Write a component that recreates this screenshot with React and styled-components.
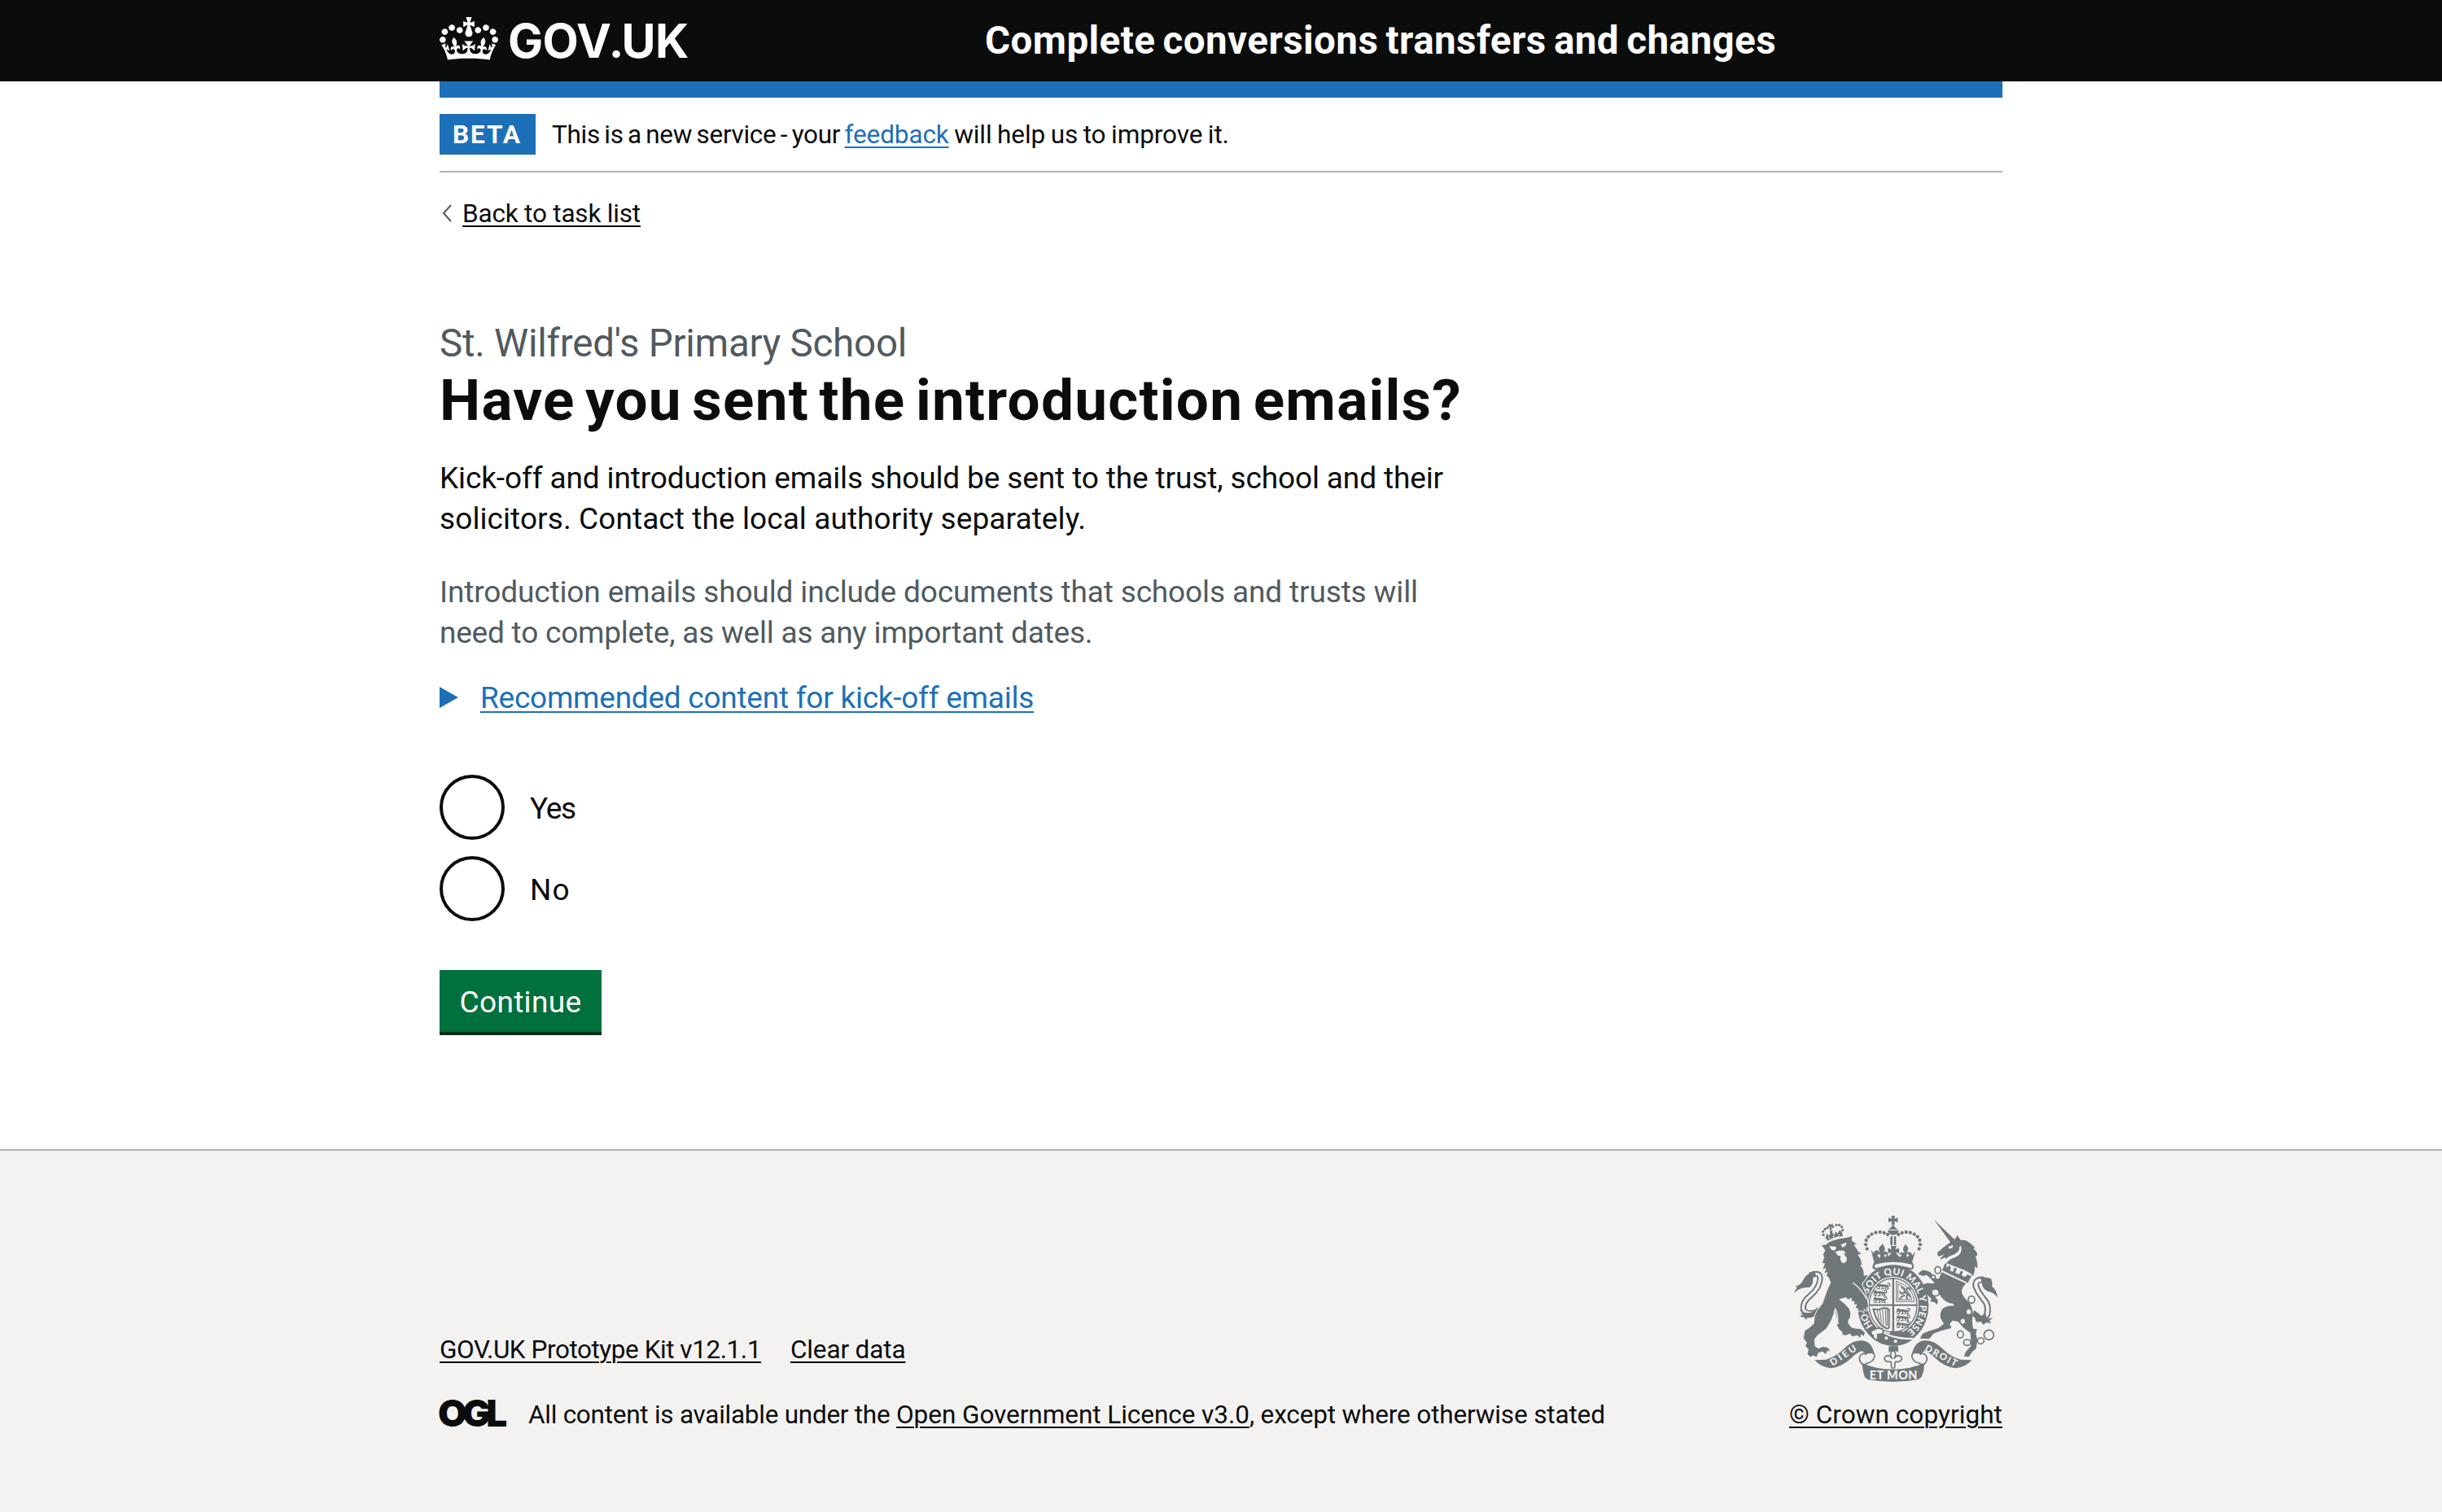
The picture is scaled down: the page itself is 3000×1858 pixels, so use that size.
import React from "react";
import styled, { createGlobalStyle } from "styled-components";

const ink = "#0b0c0c";
const secondary = "#505a5f";
const blue = "#1d70b8";
const rule = "#b1b4b6";
const footerBg = "#f3f2f1";
const crestGrey = "#6f777b";

const GlobalStyle = createGlobalStyle`
  *, *::before, *::after { box-sizing: border-box; }
  body {
    margin: 0;
    background: #fff;
    color: ${ink};
    font-family: Roboto, "Noto Sans", sans-serif;
  }
  h1, p { margin: 0; }
`;

const Page = styled.div`
  display: flex;
  flex-direction: column;
  min-height: 1858px;
`;

const Container = styled.div`
  width: 1920px;
  margin: 0 auto;
`;

const Header = styled.header`
  height: 100px;
  background: ${ink};
  color: #fff;
`;

const HeaderRow = styled(Container)`
  display: grid;
  grid-template-columns: 670px 1fr;
  height: 100px;
  padding-top: 20px;
`;

const LogoLink = styled.a`
  display: flex;
  align-items: flex-start;
  gap: 12px;
  color: #fff;
`;

const Crown = styled.svg`
  display: block;
  width: 72px;
  height: 53px;
  margin-top: 1px;
`;

const LogoText = styled.span`
  margin-top: -1px;
  font: 700 57.5px/60px Inter, Roboto, sans-serif;
  letter-spacing: -0.6px;
  white-space: nowrap;
`;

const LogoDot = styled.span`
  font-family: Lato, sans-serif;
  font-weight: 900;
`;

const ServiceName = styled.span`
  font-size: 47.5px;
  line-height: 60px;
  font-weight: 700;
  letter-spacing: 0.45px;
  word-spacing: -3px;
  white-space: nowrap;
`;

const HeaderBar = styled(Container)`
  height: 20px;
  background: ${blue};
`;

const PhaseBanner = styled(Container)`
  display: flex;
  align-items: center;
  gap: 20px;
  height: 92px;
  border-bottom: 2px solid ${rule};
`;

const Tag = styled.strong`
  width: 118px;
  height: 50px;
  padding: 1px 0 0 16px;
  background: ${blue};
  color: #fff;
  font-size: 31.5px;
  line-height: 50px;
  font-weight: 700;
  letter-spacing: 1.9px;
`;

const Small = styled.span`
  font-size: 31.5px;
  line-height: 40px;
  letter-spacing: ${(p) => p.$track || 0}px;
  word-spacing: ${(p) => p.$words || 0}px;
  white-space: pre;
`;

const PhaseText = styled.p`
  padding-top: 2px;
`;

const Link = styled.a`
  color: ${(p) => (p.$blue ? blue : ink)};
  letter-spacing: ${(p) => p.$track || 0}px;
  text-decoration: underline;
  text-decoration-thickness: 2px;
  text-underline-offset: 4px;
`;

const Main = styled(Container)`
  display: flex;
  flex-direction: column;
  align-items: flex-start;
  flex: 1;
`;

const BackLink = styled.div`
  display: flex;
  align-items: center;
  gap: 13px;
  margin-top: 31px;
  padding-left: 3px;
`;

const Chevron = styled.svg`
  display: block;
  width: 12px;
  height: 22px;
  margin-bottom: 2px;
`;

const Caption = styled.span`
  margin-top: 109px;
  color: ${secondary};
  font-size: 47.5px;
  line-height: 60px;
  letter-spacing: -0.25px;
`;

const Heading = styled.h1`
  margin-top: 2px;
  font-size: 71px;
  line-height: 75px;
  font-weight: 700;
  letter-spacing: 1.28px;
  word-spacing: -6.5px;
`;

const Paragraph = styled.p`
  display: flex;
  flex-direction: column;
  margin-top: ${(p) => p.$top}px;
  color: ${(p) => (p.$hint ? secondary : ink)};
  font-size: 37px;
  line-height: 50px;
`;

const Line = styled.span`
  letter-spacing: ${(p) => p.$track}px;
  white-space: nowrap;
`;

const Details = styled.div`
  display: flex;
  align-items: center;
  gap: 27px;
  margin-top: 30px;
  font-size: 37px;
  line-height: 50px;
`;

const Marker = styled.span`
  border-style: solid;
  border-color: transparent;
  border-width: 13.5px 0 13.5px 23px;
  border-left-color: ${blue};
  margin-bottom: 3px;
`;

const Radios = styled.div`
  display: flex;
  flex-direction: column;
  gap: 20px;
  margin-top: 69px;
`;

const Radio = styled.label`
  display: flex;
  align-items: center;
  gap: 31px;
  height: 80px;
`;

const Circle = styled.span`
  width: 80px;
  height: 80px;
  border: 4px solid ${ink};
  border-radius: 50%;
  background: #fff;
`;

const RadioLabel = styled.span`
  padding-top: 3px;
  font-size: 37px;
  line-height: 50px;
  letter-spacing: ${(p) => p.$track}px;
`;

const Button = styled.button`
  width: 199px;
  height: 76px;
  margin: 60px 0 144px;
  padding: 4px 0 0;
  border: 0;
  background: #00703c;
  box-shadow: 0 4px 0 #002d18;
  color: #fff;
  font: 400 37px/50px Roboto, "Noto Sans", sans-serif;
  letter-spacing: 0.35px;
`;

const Footer = styled.footer`
  padding: 80px 0 99px;
  border-top: 2px solid ${rule};
  background: ${footerBg};
`;

const FooterRow = styled(Container)`
  display: flex;
  align-items: flex-end;
  justify-content: space-between;
`;

const FooterMeta = styled.div`
  display: flex;
  flex-direction: column;
  gap: 40px;
`;

const FooterLinks = styled.div`
  display: flex;
  gap: 36px;
  height: 40px;
`;

const Licence = styled.div`
  display: flex;
  height: 40px;
`;

const Ogl = styled.span`
  width: 111px;
  margin-left: -2px;
  font: 900 46px/34px Inter, Lato, sans-serif;
  letter-spacing: -5.6px;
`;

const Copyright = styled.div`
  display: flex;
  flex-direction: column;
  align-items: flex-end;
  gap: 21px;
`;

const CrestSvg = styled.svg`
  display: block;
  width: 250px;
  height: 204px;
  margin-right: 6px;
`;

const Motto = styled.text`
  font-family: Lato, sans-serif;
  font-weight: 900;
  fill: ${footerBg};
`;

const g = crestGrey;
const bg = footerBg;

const crownDots = [[336,178],[338,162],[346,149],[358,140],[373,134],[389,132],[404,135],[417,141],[457,141],[470,135],[485,132],[500,134],[515,140],[527,149],[535,162],[537,178],[533,194],[341,194]];
const lionCrownDots = [[180,142],[179,130],[186,121],[195,116],[215,112],[228,106],[239,106],[248,113],[251,125]];
const chainRings = [[602,272,11,13],[585,298,8,7],[593,355,14,13],[726,381,12,13],[685,509,11,13],[710,539,13,11],[760,533,12,11],[790,511,18,18]];

function PassantLion({ x, y }) {
  return (
    <g transform={`translate(${x} ${y})`} fill="none" stroke={g} strokeLinecap="round" strokeLinejoin="round">
      <path strokeWidth="8" d="M8 9 L26 9 L42 12" />
      <path strokeWidth="4" d="M8 9 L3 15 M5 5 L12 3 M14 11 L12 21 L5 21 M24 11 L27 21 L20 22 M36 12 L34 21 M42 12 L46 21 L40 22 M42 11 Q54 12 51 4 Q47 -2 43 3" />
    </g>
  );
}

function RoyalCrown() {
  return (
    <g>
      <path d="M430 72h14l-3 11 13-4v17l-13-4 3 12h-14l3-12-13 4V79l13 4z" />
      <path d="M437 103l9 14 10 6H418l10-6z" />
      <path d="M417 126h41q-3 17-20 17t-21-17z" />
      <path d="M427 148h8v32h-8zM440 148h8v32h-8z" />
      {crownDots.map(([x, y]) => <circle key={`${x}-${y}`} cx={x} cy={y} r="6.4" />)}
      <path d="M355 196l10 14q6-14 16-10l8 8q-8-14-1-22 10-8 8-13 12 14 11 24-3 8-10 12 12-12 20 0l2 14q8-10 12-16l-13 4v-20l14 5-4-13h22l-5 13 14-5v20l-12-4q6 8 11 16 0-16 13-16 7 0 11 4-10-10-8-18 2-8 9-16 8 8 10 16 0 10-8 17 10-8 18-2l5 10 11-15-13 44q-69-20-138 0z" />
      <path fill={bg} d="M379 217q5-6 10 0t-3 10zM404 217q6-7 10 2l-7 7zM458 217q6-6 11 1l-8 7zM486 216q5-6 10 1l-7 8z" />
      <path d="M367 243q70-20 141 0l4 9q6 16-8 19-66-22-133 0-15-4-8-19z" />
      <path fill={bg} d="M372 251q66-17 132 0 6 4 0 14-65-20-131 0-8-6-1-14z" />
    </g>
  );
}

function Shield() {
  return (
    <g>
      <ellipse cx="437" cy="402" rx="131" ry="149" />
      <ellipse cx="437" cy="402" rx="94" ry="106" fill={bg} />
      <ellipse cx="437" cy="402" rx="88" ry="99" fill="none" stroke={g} strokeWidth="4" />
      <path d="M434 300h7v204h-7zM348 398h180v6H348z" />
      <PassantLion x={374} y={320} />
      <PassantLion x={362} y={345} />
      <PassantLion x={362} y={370} />
      <PassantLion x={447} y={412} />
      <PassantLion x={447} y={437} />
      <PassantLion x={447} y={462} />
      <path fill="none" stroke={g} strokeWidth="3" d="M449 312v76h66q0-50-66-76zM455 323v58h51q-8-38-51-58z" />
      <path fill="none" stroke={g} strokeWidth="6" strokeLinecap="round" strokeLinejoin="round" d="M468 336l10 6 2 12 12 6 8 10M480 354l-12 6-6-8M478 366l-10 4-5 8M492 360l-6 10 4 8M488 350q-4-10 4-12t8 8" />
      <path fill="none" stroke={g} strokeWidth="6" strokeLinejoin="round" d="M364 415q14 6 28 0 16-8 30 2v66q-4 8-14 2-32-16-44-70z" />
      <path fill="none" stroke={g} strokeWidth="3" d="M378 418l8 40M388 418l6 50M398 416l4 58M408 414l3 64M415 416v62" />
      <path d="M427 497h48l-17 14h-34z" />
      <path id="garter-low" fill="none" d="M363 478A99 112 0 0 1 341 375" />
      <path id="garter-top" fill="none" d="M345 360A99 112 0 1 1 486 499" />
      <Motto fontSize="35"><textPath href="#garter-low" textLength="54">HO</textPath></Motto>
      <Motto fontSize="35"><textPath href="#garter-top" textLength="400">SOIT QUI MAL Y PENSE</textPath></Motto>
      <path fill={bg} d="M358 500l18-16 26 6 6 14Q450 522 512 522l-6 8Q450 532 404 512l-2 18-24 4-14-12z" />
      <path d="M378 512l24-6Q450 532 508 528 480 552 436 551 400 548 376 532z" />
      <path fill="none" stroke={g} strokeWidth="6" d="M364 494q18-14 34-4 8 10-2 18l-16 2 10 10q-2 12-14 10-16-4-12-20" />
      <circle cx="412" cy="523" r="6" fill={bg} />
      <circle cx="446" cy="535" r="6" fill={bg} />
    </g>
  );
}

function Lion() {
  return (
    <g>
      {lionCrownDots.map(([x, y]) => <circle key={`${x}-${y}`} cx={x} cy={y} r="5" />)}
      <path d="M201 101l7 4 6-5 1 9-7 4 5 10-10 2 1-11-7-2z" />
      <path d="M181 144l8 8 4-16 7 12 5-10-2-10 10-2 1 10 7 8 3-14 9 8 5-12 10 4 4 18q-26-2-56 16z" />
      <path fill={bg} d="M196 157l6-7 3 5zM213 150l6-5 3 5zM232 145l7-5 2 5z" />
      <path fill="none" stroke={g} strokeWidth="22" d="M130 292Q166 276 168 302Q166 338 134 364Q102 390 106 418Q116 438 152 428" />
      <path fill="none" stroke={bg} strokeWidth="10" d="M130 294Q166 276 168 302Q166 338 134 364Q102 390 106 416Q116 438 156 426" />
      <path d="M72 358Q76 344 84 336L76 332Q98 328 106 308Q116 286 146 280L154 290L142 300Q144 328 128 336Q104 334 88 344Q78 350 72 358Z" />
      <path d="M88 430Q104 436 114 428Q140 436 158 408L160 430Q146 450 122 448L114 456L112 448L92 442L106 438Z" />
      <path
        stroke={bg}
        strokeWidth="3"
        d="M171 178L188 178Q202 164 222 160Q246 152 264 152L288 145L285 162L306 178L294 180Q306 194 308 202L323 213L309 216Q324 236 322 252L318 256Q332 270 330 292L347 288Q336 308 322 324Q336 352 342 378L348 412L340 410L342 424L330 416L330 430L318 422L306 428L308 416L298 412L302 398L292 402L294 388L282 388L284 376L270 382L264 374L248 378L240 380Q262 396 276 414Q284 430 280 446Q268 462 274 470Q282 486 296 486L318 488L334 502L330 518L320 510L316 526L306 514L286 518L278 508L262 514L250 512L248 500L238 492L228 474L236 468L228 450L222 420Q216 454 190 490L158 514L148 528L150 552L162 560Q182 548 200 560L208 574L196 570L188 584L178 574L162 578L156 594L142 588L132 594L120 582L124 564L112 552L118 540L106 524L110 496L128 484L144 470L148 438L158 418L176 396L192 350L206 318L198 298L190 296L194 280L182 288L188 266L176 272L184 248L174 248L182 226L178 214L186 200Z"
      />
      <path fill={bg} d="M202 184L226 186Q230 198 218 200Q206 198 202 184ZM244 178L266 170Q264 186 250 188ZM222 206L238 200L254 200L262 208L256 214L266 226L266 238Q258 252 248 244Q240 234 244 220Q230 220 230 212Z" />
      <path fill="none" stroke={bg} strokeWidth="4" d="M288 318Q320 340 340 380M222 412Q236 436 232 462" />
    </g>
  );
}

function Unicorn() {
  return (
    <g>
      <path fill="none" stroke={g} strokeWidth="24" d="M772 308Q738 304 742 332Q750 354 768 376Q792 400 784 434Q778 450 762 456" />
      <path fill="none" stroke={bg} strokeWidth="12" d="M772 310Q738 304 742 332Q750 354 768 376Q792 400 784 434Q778 450 758 458" />
      <path d="M760 302Q780 296 798 304Q804 318 802 332Q820 348 822 374Q808 354 790 352Q766 344 764 320Z" />
      <path d="M736 420L752 432L768 446L778 432L784 452L804 448L792 460L800 468L780 466L770 474L760 462L744 464L738 448L728 440Z" />
      <path d="M588 86L664 160L650 172Z" />
      <path d="M647 170L662 162L674 144L686 162Q706 158 722 174L738 188L734 194Q748 204 747 218L741 222Q748 240 748 266L738 258Q740 278 732 294L722 284L700 272L632 246L640 238L628 226L610 234L614 224L602 220L600 208L626 186Z" />
      <path fill={bg} d="M640 186L658 180L656 190L644 194ZM688 184Q694 216 664 226Q644 232 636 244L628 238Q636 222 658 216Q684 206 682 184ZM606 222L626 214L614 226Z" />
      <path d="M628 248L634 248L634 264L644 254L650 264L646 274L658 278L662 264L672 266L666 282L680 288L688 274L694 278L690 292L702 298L712 288L718 292L726 294L712 320L618 274Z" />
      <path fill="none" stroke={bg} strokeWidth="3" d="M620 276L710 319" />
      <path d="M616 280L706 322Q690 336 690 352Q692 370 712 386Q732 408 730 434Q726 460 732 488L746 490L742 508L748 530L743 562L730 572L716 592L698 590L706 572L724 552L722 504L698 486L676 462L656 458L646 470L652 486L614 496L586 506L570 526L536 524L546 506L566 498L604 486L624 470L612 450Q608 428 620 414Q636 402 662 404L658 396Q630 396 608 362L576 346L580 358L590 368L602 384L600 400L588 390L574 388L578 378L562 362L548 336L546 326L560 320L590 322Q580 306 572 300L560 290L548 294L530 288Q534 274 552 272L572 278L584 290L596 304L606 304Z" />
      <ellipse cx="716" cy="426" rx="8" ry="9" fill={bg} />
      <ellipse cx="694" cy="461" rx="8" ry="9" fill={bg} />
      {chainRings.map(([x, y, rx, ry]) => (
        <ellipse key={x} cx={x} cy={y} rx={rx} ry={ry} fill={bg} stroke={g} strokeWidth="5" />
      ))}
    </g>
  );
}

function RibbonHalf() {
  return (
    <g>
      <path d="M148 604L190 602Q226 592 256 562Q290 528 324 532Q356 536 366 572L368 582Q348 574 342 590L324 570Q306 574 288 592Q250 630 208 634Q172 632 148 604Z" />
      <path fill={bg} stroke={g} strokeWidth="5" d="M346 578Q372 572 368 594Q362 612 340 616L328 624Q306 604 316 588Q326 574 338 584" />
    </g>
  );
}

function Crest() {
  return (
    <CrestSvg viewBox="72 72 750 612" fill={g}>
      <RoyalCrown />
      <Shield />
      <Lion />
      <Unicorn />
      <RibbonHalf />
      <g transform="translate(875 0) scale(-1 1)"><RibbonHalf /></g>
      <path d="M322 614q50 24 115 24t115-24l-2 28-8 24-12 10q-94 16-186 0l-12-10-6-24z" />
      <path d="M421 553h35v22q-16-12-35 0z" />
      <path fill={bg} stroke={g} strokeWidth="5" strokeLinejoin="round" d="M437 566q16 16 4 32 10-16 24-8 10 12-6 20l-14 0-2 12q4 10-6 12-10-2-6-12l-2-12-14 0q-16-8-6-20 14-8 24 8-12-16 4-32z" />
      <Motto fontSize="35" textLength="108" transform="translate(214 626) rotate(-33)">DIEU</Motto>
      <Motto fontSize="43" textLength="176" x="350" y="674">ET MON</Motto>
      <Motto fontSize="35" textLength="130" transform="translate(551 568) rotate(28)">DROIT</Motto>
    </CrestSvg>
  );
}

function CrownLogo() {
  return (
    <Crown viewBox="0 0 132 97" fill="currentColor">
      <path fillRule="evenodd" d="M25 30.2c3.5 1.5 7.7-.2 9.1-3.7 1.5-3.6-.2-7.8-3.9-9.2-3.6-1.4-7.6.3-9.1 3.9-1.4 3.5.3 7.5 3.9 9zM9 39.5c3.6 1.5 7.8-.2 9.2-3.7 1.5-3.6-.2-7.8-3.9-9.1-3.6-1.5-7.6.2-9.1 3.8-1.4 3.5.3 7.5 3.8 9zM4.4 57.2c3.5 1.5 7.7-.2 9.1-3.8 1.5-3.6-.2-7.7-3.9-9.1-3.5-1.5-7.6.3-9.1 3.8-1.4 3.5.3 7.6 3.9 9.1zm38.3-21.4c3.5 1.5 7.7-.2 9.1-3.8 1.5-3.6-.2-7.7-3.9-9.1-3.6-1.5-7.6.3-9.1 3.8-1.3 3.6.4 7.7 3.9 9.1zm64.4-5.6c-3.6 1.5-7.8-.2-9.1-3.7-1.5-3.6.2-7.8 3.8-9.2 3.6-1.4 7.7.3 9.2 3.9 1.3 3.5-.4 7.5-3.9 9zm15.9 9.3c-3.6 1.5-7.7-.2-9.1-3.7-1.5-3.6.2-7.8 3.7-9.1 3.6-1.5 7.7.2 9.2 3.8 1.5 3.5-.3 7.5-3.8 9zm4.7 17.7c-3.6 1.5-7.8-.2-9.2-3.8-1.5-3.6.2-7.7 3.9-9.1 3.6-1.5 7.7.3 9.2 3.8 1.3 3.5-.4 7.6-3.9 9.1zM89.3 35.8c-3.6 1.5-7.8-.2-9.2-3.8-1.4-3.6.2-7.7 3.9-9.1 3.6-1.5 7.7.3 9.2 3.8 1.4 3.6-.3 7.7-3.9 9.1zM69.7 17.7l8.9 4.7V9.3l-8.9 2.8c-.2-.3-.5-.6-.9-.9L72.4 0H59.6l3.5 11.2c-.3.3-.6.5-.9.9l-8.8-2.8v13.1l8.8-4.7c.3.3.6.7.9.9l-5 15.4v.1c-.2.8-.4 1.6-.4 2.4 0 4.1 3.1 7.5 7 8.1h.2c.3 0 .7.1 1 .1.4 0 .7 0 1-.1h.2c4-.6 7.1-4.1 7.1-8.1 0-.8-.1-1.7-.4-2.4V34l-5.1-15.4c.4-.2.7-.6 1-.9zM66 92.8c16.9 0 32.8 1.1 47.1 3.2 4-16.9 8.9-26.7 14-33.5l-9.6-3.4c1 4.9 1.1 7.2 0 10.2-1.5-1.4-3-4.3-4.2-8.7L108.6 76c2.8-2 5-3.2 7.5-3.3-4.4 9.4-10 11.9-13.6 11.2-4.3-.8-6.3-4.6-5.6-7.9 1-4.7 5.7-5.9 8-.5 4.3-8.7-3-11.4-7.6-8.8 7.1-7.2 7.9-13.5 2.1-21.1-8 6.1-8.1 12.3-4.5 20.8-4.7-5.4-12.1-2.5-9.5 6.2 3.4-5.2 7.9-2 7.2 3.1-.6 4.3-6.4 7.8-13.5 7.2-10.3-.9-10.9-8-11.2-13.8 2.5-.5 7.1 1.8 11 7.3L80.2 60c-4.1 4.4-8 5.3-12.3 5.4 1.4-4.4 8-11.6 8-11.6H55.5s6.4 7.2 7.9 11.6c-4.2-.1-8-1-12.3-5.4l1.4 16.4c3.9-5.5 8.5-7.7 10.9-7.3-.3 5.8-.9 12.8-11.1 13.8-7.2.6-12.9-2.9-13.5-7.2-.7-5 3.8-8.3 7.1-3.1 2.7-8.7-4.6-11.6-9.4-6.2 3.7-8.5 3.6-14.7-4.6-20.8-5.8 7.6-5 13.9 2.2 21.1-4.7-2.6-11.9.1-7.7 8.8 2.3-5.5 7.1-4.2 8.1.5.7 3.3-1.3 7.1-5.7 7.9-3.5.7-9-1.8-13.5-11.2 2.5.1 4.7 1.3 7.5 3.3l-4.7-15.4c-1.2 4.4-2.7 7.2-4.3 8.7-1.1-3-.9-5.3 0-10.2l-9.5 3.4c5 6.9 9.9 16.7 14 33.5 14.8-2.1 30.8-3.2 47.7-3.2z" />
    </Crown>
  );
}

export default function App() {
  return (
    <Page>
      <GlobalStyle />
      <Header>
        <HeaderRow>
          <LogoLink>
            <CrownLogo />
            <LogoText>GOV<LogoDot>.</LogoDot>UK</LogoText>
          </LogoLink>
          <ServiceName>Complete conversions transfers and changes</ServiceName>
        </HeaderRow>
      </Header>
      <HeaderBar />
      <PhaseBanner>
        <Tag>BETA</Tag>
        <PhaseText>
          <Small $track={-0.3} $words={-2.1}>{"This is a new service - your "}</Small>
          <Small><Link $blue $track={-0.13}>feedback</Link></Small>
          <Small $track={-0.1} $words={-1.1}>{" will help us to improve it."}</Small>
        </PhaseText>
      </PhaseBanner>
      <Main as="main">
        <BackLink>
          <Chevron viewBox="0 0 12 22" fill="none" stroke={secondary} strokeWidth="2">
            <path d="M11 1 2 11l9 10" />
          </Chevron>
          <Small><Link $track={-0.19}>Back to task list</Link></Small>
        </BackLink>
        <Caption>St. Wilfred's Primary School</Caption>
        <Heading>Have you sent the introduction emails?</Heading>
        <Paragraph $top={34}>
          <Line $track={-0.12}>Kick-off and introduction emails should be sent to the trust, school and their</Line>
          <Line $track={0.09}>solicitors. Contact the local authority separately.</Line>
        </Paragraph>
        <Paragraph $hint $top={40}>
          <Line $track={-0.13}>Introduction emails should include documents that schools and trusts will</Line>
          <Line $track={-0.22}>need to complete, as well as any important dates.</Line>
        </Paragraph>
        <Details>
          <Marker />
          <Link $blue $track={-0.25}>Recommended content for kick-off emails</Link>
        </Details>
        <Radios>
          <Radio><Circle /><RadioLabel $track={-1.3}>Yes</RadioLabel></Radio>
          <Radio><Circle /><RadioLabel $track={1}>No</RadioLabel></Radio>
        </Radios>
        <Button>Continue</Button>
      </Main>
      <Footer>
        <FooterRow>
          <FooterMeta>
            <FooterLinks>
              <Small><Link $track={-0.45}>GOV.UK Prototype Kit v12.1.1</Link></Small>
              <Small><Link $track={-0.13}>Clear data</Link></Small>
            </FooterLinks>
            <Licence>
              <Ogl>OGL</Ogl>
              <Small $track={-0.26}>
                {"All content is available under the "}
                <Link $track={-0.05}>Open Government Licence v3.0</Link>
                <Small $track={-0.15}>, except where otherwise stated</Small>
              </Small>
            </Licence>
          </FooterMeta>
          <Copyright>
            <Crest />
            <Small><Link $track={0.07}>© Crown copyright</Link></Small>
          </Copyright>
        </FooterRow>
      </Footer>
    </Page>
  );
}
